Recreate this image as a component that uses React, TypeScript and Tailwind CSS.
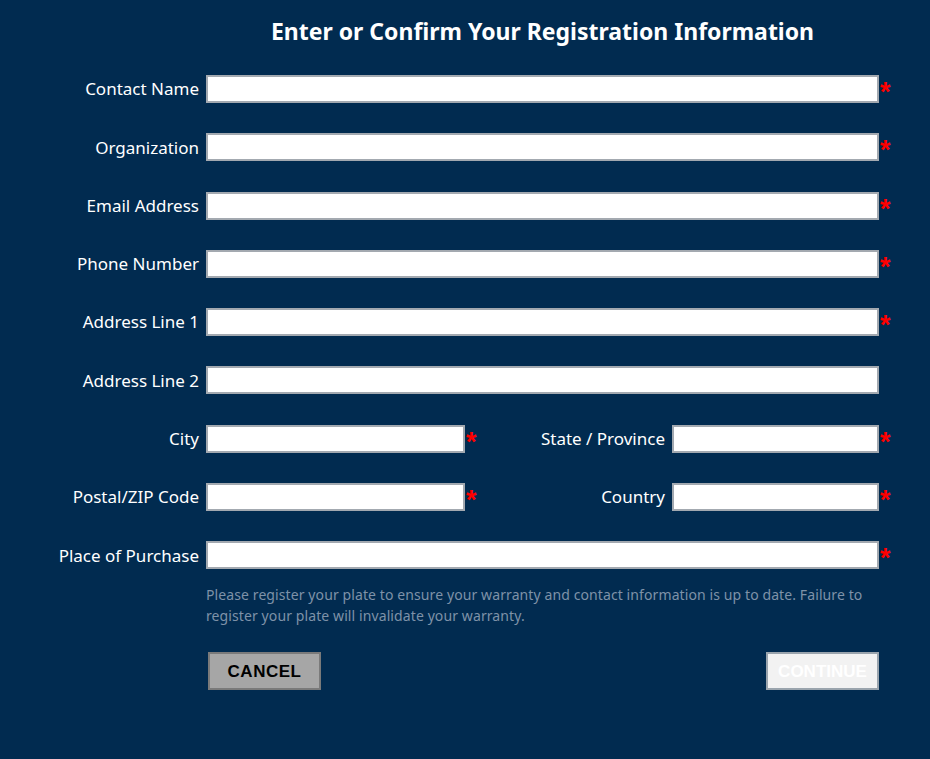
import React from "react";

type Field = { label: string; required: boolean };

const wideFields: Field[] = [
  { label: "Contact Name", required: true },
  { label: "Organization", required: true },
  { label: "Email Address", required: true },
  { label: "Phone Number", required: true },
  { label: "Address Line 1", required: true },
  { label: "Address Line 2", required: false },
];

// asterisk keeps the row at input height, glyph centred via line-height
const Star = ({ show, className = "" }: { show: boolean; className?: string }) => (
  <span
    className={`block h-[28px] overflow-visible text-[#ff0000] text-[27px] font-bold leading-[34px] pl-[1px] ${className}`}
    style={{ fontFamily: "'Liberation Sans', sans-serif" }}
  >
    {show ? "*" : ""}
  </span>
);

const inputCls =
  "h-[28px] bg-white border-2 border-[#a3a9b0] outline-none px-1 text-[15px] text-black";

const Label = ({ text, w }: { text: string; w: string }) => (
  <label className={`${w} text-right pr-[7px] text-[17px] text-white whitespace-nowrap`}>
    {text}
  </label>
);

export default function App() {
  return (
    <div
      className="w-[930px] h-[759px] bg-[#012b50] pt-[14px]"
      style={{ fontFamily: "'Noto Sans', 'Open Sans', sans-serif" }}
    >
      <h1 className="ml-[206px] w-[673px] text-center text-white font-bold text-[23px] leading-[34px]">
        Enter or Confirm Your Registration Information
      </h1>

      <div className="mt-[27px] flex flex-col gap-[30.3px]">
        {wideFields.map((f) => (
          <div key={f.label} className="flex items-center">
            <Label text={f.label} w="w-[206px]" />
            <input className={`${inputCls} w-[673px]`} />
            <Star show={f.required} />
          </div>
        ))}

        <div className="flex items-center">
          <Label text="City" w="w-[206px]" />
          <input className={`${inputCls} w-[259px]`} />
          <Star show className="w-[8px]" />
          <Label text="State / Province" w="w-[199px]" />
          <input className={`${inputCls} w-[207px]`} />
          <Star show />
        </div>

        <div className="flex items-center">
          <Label text="Postal/ZIP Code" w="w-[206px]" />
          <input className={`${inputCls} w-[259px]`} />
          <Star show className="w-[8px]" />
          <Label text="Country" w="w-[199px]" />
          <input className={`${inputCls} w-[207px]`} />
          <Star show />
        </div>

        <div className="flex items-center">
          <Label text="Place of Purchase" w="w-[206px]" />
          <input className={`${inputCls} w-[673px]`} />
          <Star show />
        </div>
      </div>

      <p className="ml-[206px] w-[673px] mt-[15px] text-[14px] leading-[21px] tracking-[0.1px] text-[#7e92a8]">
        Please register your plate to ensure your warranty and contact information is up to date.
        Failure to register your plate will invalidate your warranty.
      </p>

      <div
        className="ml-[208px] w-[671px] mt-[26px] flex justify-between"
        style={{ fontFamily: "'Liberation Sans', Arial, sans-serif" }}
      >
        <button className="w-[113px] h-[38px] bg-[#a6a6a6] border-2 border-[#7a7a7a] text-black font-bold text-[17px] tracking-[0.5px]">
          CANCEL
        </button>
        <button className="w-[113px] h-[38px] bg-[#f2f2f2] border-2 border-[#9aa4ad] text-white font-bold text-[17px]">
          CONTINUE
        </button>
      </div>
    </div>
  );
}
